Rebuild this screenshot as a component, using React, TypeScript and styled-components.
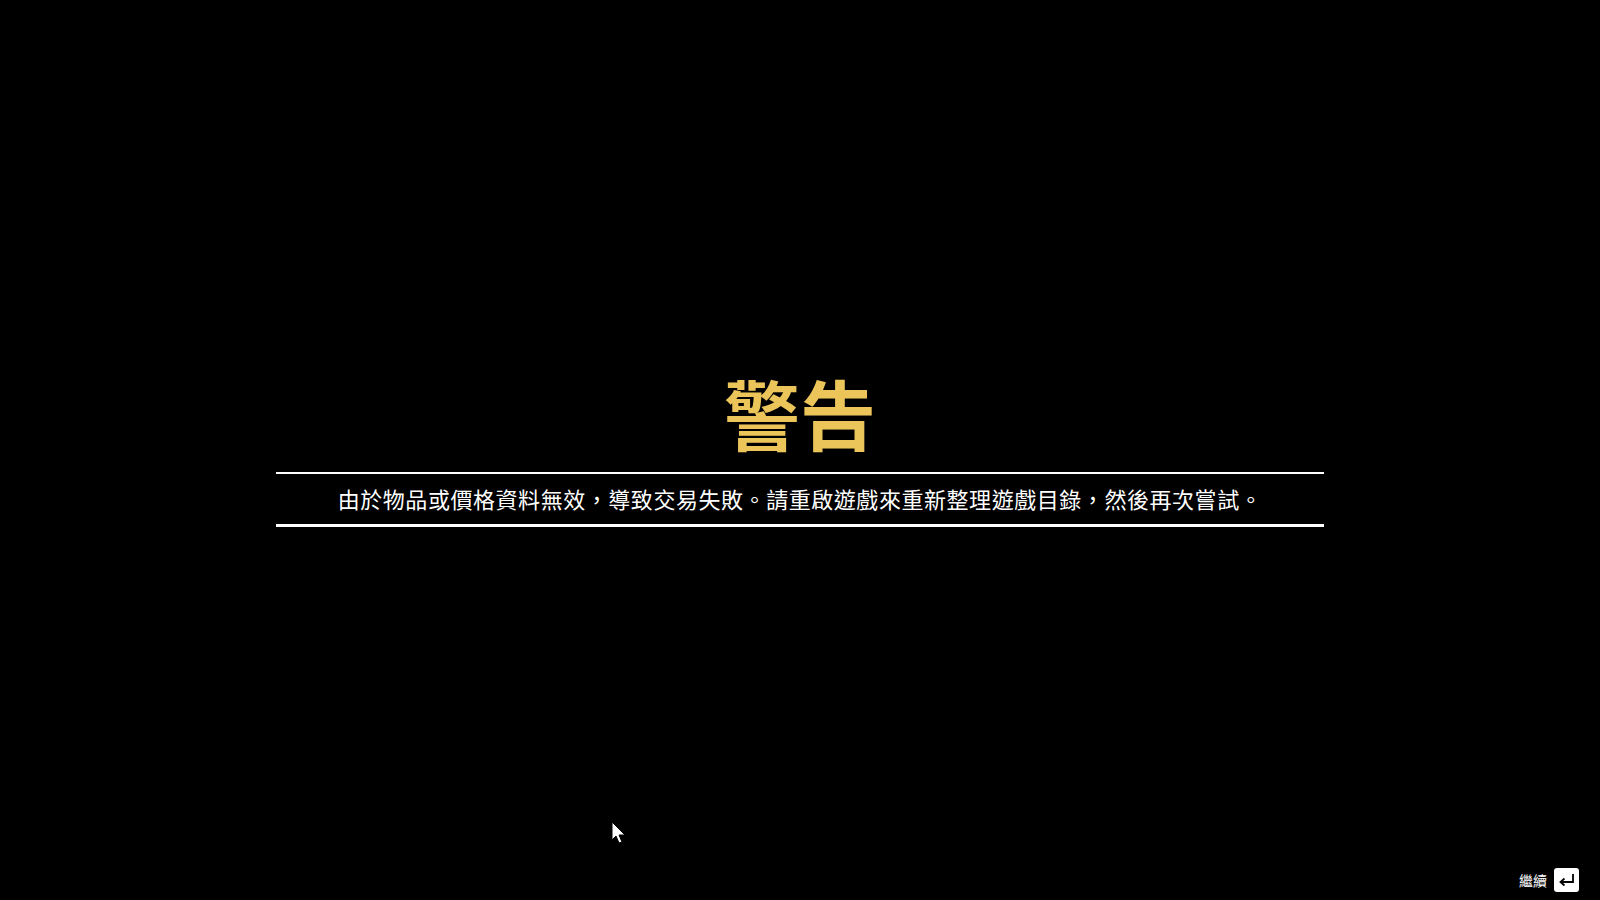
import React from "react";
import styled, { createGlobalStyle } from "styled-components";

const Global = createGlobalStyle`
  html, body { margin: 0; padding: 0; background: #000; }
  body { font-family: "Noto Sans CJK TC", "Noto Sans", sans-serif; }
`;

const Screen = styled.div`
  position: relative;
  width: 100vw;
  height: 100vh;
  background: #000;
  display: flex;
  flex-direction: column;
  overflow: hidden;
`;

const Main = styled.main`
  flex: 1;
  display: flex;
  flex-direction: column;
  align-items: center;
  padding-top: 368px;
`;

const Title = styled.h1`
  margin: 0 0 16px;
  font-family: "Noto Sans CJK TC", sans-serif;
  font-weight: 700;
  font-size: 76px;
  line-height: 88px;
  color: #ebc45a;
  letter-spacing: 0;
`;

const Band = styled.div`
  width: 1048px;
  border-top: 2px solid #fff;
  border-bottom: 3px solid #fff;
  display: flex;
  justify-content: center;
  padding-bottom: 2px;
`;

const Message = styled.p`
  margin: 0;
  font-family: "Noto Sans CJK TC", sans-serif;
  font-size: 22px;
  line-height: 48px;
  letter-spacing: 0.55px;
  color: #fff;
`;

const Footer = styled.footer`
  display: flex;
  justify-content: flex-end;
  align-items: center;
  gap: 7px;
  padding: 0 21px 8px 0;
`;

const HintLabel = styled.span`
  font-family: "Noto Sans CJK TC", sans-serif;
  font-size: 14px;
  color: #fff;
  letter-spacing: 0;
`;

const KeyCap = styled.span`
  width: 25px;
  height: 24px;
  border-radius: 3px;
  background: #fff;
  display: flex;
  align-items: center;
  justify-content: center;
`;

const Cursor = styled.svg`
  position: absolute;
  left: 611px;
  top: 821px;
`;

export default function App() {
  return (
    <Screen>
      <Global />
      <Main>
        <Title>警告</Title>
        <Band>
          <Message>
            由於物品或價格資料無效，導致交易失敗。請重啟遊戲來重新整理遊戲目錄，然後再次嘗試。
          </Message>
        </Band>
      </Main>
      <Footer>
        <HintLabel>繼續</HintLabel>
        <KeyCap>
          <svg width="18" height="14" viewBox="0 0 18 14">
            <path d="M15 1 V9 H3" fill="none" stroke="#000" strokeWidth="1.8" />
            <path d="M6.5 5.5 L2.5 9 L6.5 12.5" fill="none" stroke="#000" strokeWidth="1.8" />
          </svg>
        </KeyCap>
      </Footer>
      <Cursor width="16" height="24" viewBox="0 0 16 24">
        <path d="M1 1 L1 19 L5 15 L8 22 L11 21 L8 14 L14 14 Z" fill="#fff" stroke="#000" strokeWidth="1" />
      </Cursor>
    </Screen>
  );
}
